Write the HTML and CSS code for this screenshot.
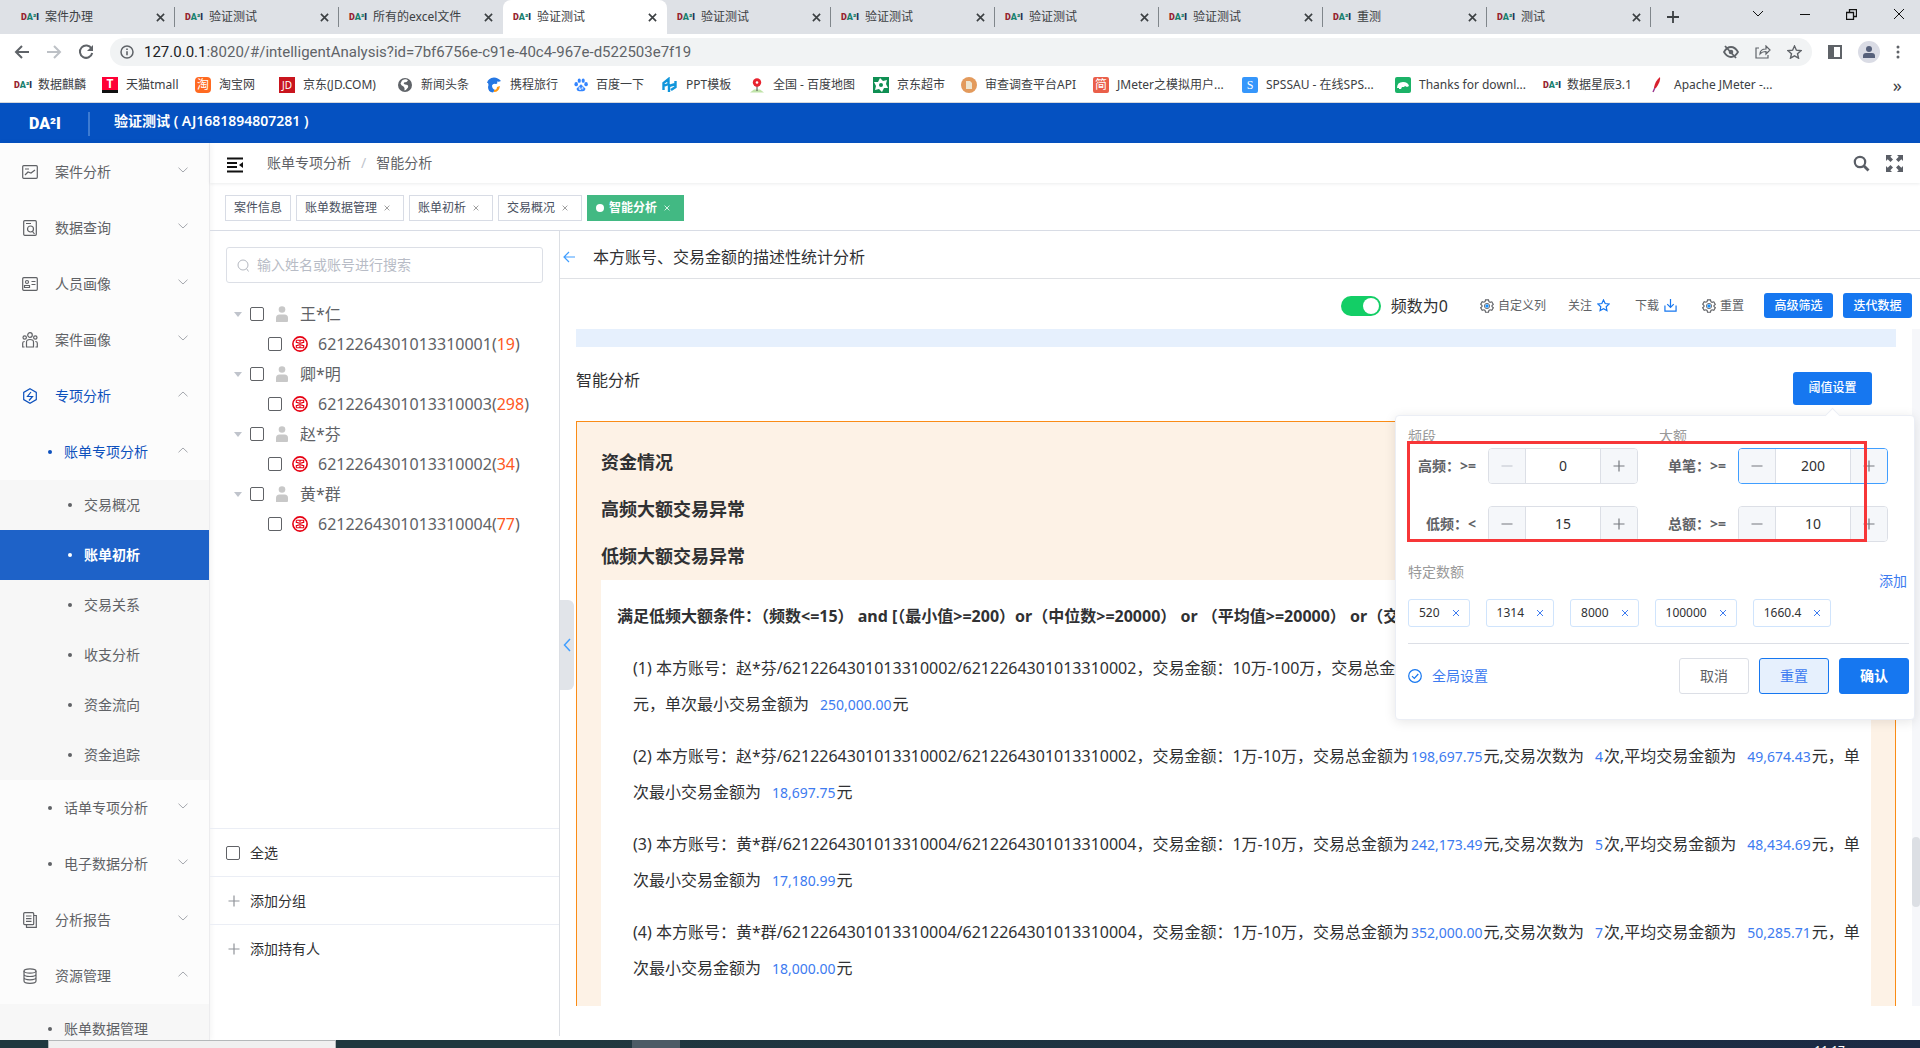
FILE: index.html
```html
<!DOCTYPE html>
<html lang="zh-CN">
<head>
<meta charset="utf-8">
<title>验证测试</title>
<link rel="stylesheet" href="styles.css">
</head>
<body>
<svg class="sprite" aria-hidden="true">
  <symbol id="i-x" viewBox="0 0 10 10"><path d="M1 1l8 8M9 1l-8 8" fill="none" stroke="currentColor" stroke-width="1.8"/></symbol>
  <symbol id="i-thinx" viewBox="0 0 10 10"><path d="M2 2l6 6M8 2l-6 6" fill="none" stroke="currentColor" stroke-width="1"/></symbol>
  <symbol id="i-down" viewBox="0 0 10 6"><path d="M.5 .7l4.500 4.300 4.500-4.300" fill="none" stroke="currentColor"/></symbol>
  <symbol id="i-up" viewBox="0 0 10 6"><path d="M.5 5.300l4.500-4.300 4.500 4.300" fill="none" stroke="currentColor"/></symbol>
  <symbol id="i-person" viewBox="0 0 12 16"><circle cx="6" cy="3.500" r="3.300" fill="#c8c8c8"/><path d="M0 16v-4q0-3.500 3.500-3.500h5q3.500 0 3.500 3.500v3q0 1-1 1z" fill="#c8c8c8"/></symbol>
  <symbol id="i-bank" viewBox="0 0 16 16"><circle cx="8" cy="8" r="7.100" fill="none" stroke="#e60012" stroke-width="1.600"/><path d="M4.300 4.300h7.400v2.200h-2.400M4.300 4.300v2.200h2.400M4.300 11.700h7.400V9.500h-2.400M4.300 11.700V9.500h2.400M8 4.300v7.400M5.500 8h5" fill="none" stroke="#e60012" stroke-width="1.100"/></symbol>
  <symbol id="i-gear" viewBox="0 0 16 16"><path d="M6.300 1h3.400l.5 2 1.300.8 2-.6 1.700 2.900-1.500 1.300v1.300l1.500 1.300-1.700 2.900-2-.6-1.300.8-.5 2H6.300l-.5-2-1.300-.8-2 .6L.8 10l1.500-1.300V7.400L.8 6l1.700-2.900 2 .6L5.800 3z" fill="none" stroke="#606266" stroke-width="1.300"/><circle cx="8" cy="8" r="3" fill="none" stroke="#606266"/><circle cx="8" cy="8" r="2" fill="#1890ff"/></symbol>
  <symbol id="i-plus" viewBox="0 0 12 12"><path d="M6 .5v11M.5 6h11" fill="none" stroke="currentColor" stroke-width="1.200"/></symbol>
  <symbol id="i-minus" viewBox="0 0 12 12"><path d="M.5 6h11" fill="none" stroke="currentColor" stroke-width="1.200"/></symbol>
</svg>
<div class="window">
  <nav class="tabstrip" aria-label="浏览器标签">
    <div class="btab"><span class="dai"><i>D</i><b>A²</b><u>I</u></span><span class="bt">案件办理</span><svg class="x"><use href="#i-x"/></svg></div>
    <div class="btab"><span class="dai"><i>D</i><b>A²</b><u>I</u></span><span class="bt">验证测试</span><svg class="x"><use href="#i-x"/></svg></div>
    <div class="btab nosep"><span class="dai"><i>D</i><b>A²</b><u>I</u></span><span class="bt">所有的excel文件</span><svg class="x"><use href="#i-x"/></svg></div>
    <div class="btab current"><span class="dai"><i>D</i><b>A²</b><u>I</u></span><span class="bt">验证测试</span><svg class="x"><use href="#i-x"/></svg></div>
    <div class="btab"><span class="dai"><i>D</i><b>A²</b><u>I</u></span><span class="bt">验证测试</span><svg class="x"><use href="#i-x"/></svg></div>
    <div class="btab"><span class="dai"><i>D</i><b>A²</b><u>I</u></span><span class="bt">验证测试</span><svg class="x"><use href="#i-x"/></svg></div>
    <div class="btab"><span class="dai"><i>D</i><b>A²</b><u>I</u></span><span class="bt">验证测试</span><svg class="x"><use href="#i-x"/></svg></div>
    <div class="btab"><span class="dai"><i>D</i><b>A²</b><u>I</u></span><span class="bt">验证测试</span><svg class="x"><use href="#i-x"/></svg></div>
    <div class="btab"><span class="dai"><i>D</i><b>A²</b><u>I</u></span><span class="bt">重测</span><svg class="x"><use href="#i-x"/></svg></div>
    <div class="btab"><span class="dai"><i>D</i><b>A²</b><u>I</u></span><span class="bt">测试</span><svg class="x"><use href="#i-x"/></svg></div>
    <div class="winctl">
      <svg width="14" height="14" viewBox="0 0 14 14"><path d="M7 1v12M1 7h12" stroke="#3c4043" stroke-width="1.800"/></svg>
      <span class="grow"></span>
      <svg width="12" height="8" viewBox="0 0 12 8"><path d="M1 1l5 5 5-5" fill="none" stroke="#111"/></svg>
      <svg width="10" height="10" viewBox="0 0 10 10"><path d="M0 5.500h10" stroke="#111"/></svg>
      <svg width="11" height="11" viewBox="0 0 11 11"><path d="M.5 3.500h7v7h-7zM3.500 3.500v-3h7v7h-3" fill="none" stroke="#111" stroke-width="1.300"/></svg>
      <svg width="12" height="12" viewBox="0 0 12 12"><path d="M1 1l10 10M11 1L1 11" stroke="#111"/></svg>
    </div>
  </nav>

  <div class="urlbar">
    <svg width="16" height="16" viewBox="0 0 16 16"><path d="M15 8H2M8 2L2 8l6 6" fill="none" stroke="#5f6368" stroke-width="2"/></svg>
    <svg width="16" height="16" viewBox="0 0 16 16"><path d="M1 8h13M8 2l6 6-6 6" fill="none" stroke="#bdc1c6" stroke-width="2"/></svg>
    <svg width="16" height="16" viewBox="0 0 16 16"><path d="M13.500 4.500A6.200 6.200 0 1 0 14.200 9" fill="none" stroke="#5f6368" stroke-width="2"/><path d="M15 1v6H9z" fill="#5f6368"/></svg>
    <div class="address">
      <svg width="14" height="14" viewBox="0 0 14 14"><circle cx="7" cy="7" r="6" fill="none" stroke="#5f6368" stroke-width="1.500"/><path d="M7 6.200v4M7 3.500v1.600" stroke="#5f6368" stroke-width="1.600"/></svg>
      <span class="url"><em>127.0.0.1</em>:8020/#/intelligentAnalysis?id=7bf6756e-c91e-40c4-967e-d522503e7f19</span>
      <svg width="16" height="14" viewBox="0 0 16 14"><path d="M1 7q3-5 7-5t7 5q-3 5-7 5T1 7z" fill="none" stroke="#5f6368" stroke-width="1.800"/><circle cx="8" cy="7" r="2.300" fill="#5f6368"/><path d="M2 1l11 12" stroke="#5f6368" stroke-width="1.800"/></svg>
      <svg width="16" height="14" viewBox="0 0 16 14"><path d="M4 3H1v10h12v-3M5 9q0-5 6-5V1l4 4-4 4V6.500Q7 6.500 5 9z" fill="none" stroke="#5f6368" stroke-width="1.200"/></svg>
      <svg width="15" height="14" viewBox="0 0 15 14"><path d="M7.500 1l1.900 4.200 4.600.5-3.500 3 1 4.400-4-2.300-4 2.300 1-4.400-3.500-3 4.600-.5z" fill="none" stroke="#5f6368" stroke-width="1.400"/></svg>
    </div>
    <svg width="14" height="14" viewBox="0 0 14 14"><path d="M0 0h14v14H0zM6 2v10h6V2z" fill="#5f6368" fill-rule="evenodd"/></svg>
    <svg width="22" height="22" viewBox="0 0 22 22"><circle cx="11" cy="11" r="11" fill="#dadce5"/><circle cx="11" cy="8" r="3" fill="#56607a"/><path d="M5 17v-2q0-3 3-3h6q3 0 3 3v2z" fill="#56607a"/></svg>
    <svg width="4" height="14" viewBox="0 0 4 14"><g fill="#5f6368"><circle cx="2" cy="2" r="1.500"/><circle cx="2" cy="7" r="1.500"/><circle cx="2" cy="12" r="1.500"/></g></svg>
  </div>

  <nav class="bookmarks" aria-label="书签">
    <a href="#"><span class="dai"><i>D</i><b>A²</b><u>I</u></span>数据麒麟</a>
    <a href="#"><span class="fav tmall">T</span>天猫tmall</a>
    <a href="#"><span class="fav taobao">淘</span>淘宝网</a>
    <a href="#"><span class="fav jd">JD</span>京东(JD.COM)</a>
    <a href="#"><svg width="16" height="16" viewBox="0 0 16 16"><circle cx="8" cy="8" r="7" fill="#5f6368"/><path d="M5 3.500q4-2.500 6 0-1 2-4 2-1 1.500 1 2 4 0 3 3-2 3-3.500 3 .5-3-1-4-2.500-1-3-3z" fill="#fff"/></svg>新闻头条</a>
    <a href="#"><svg width="16" height="16" viewBox="0 0 16 16"><path d="M1 6q1-5 7-5.500 4 0 7 3.500-2 1-4 .5 1 2-1 2.500-3-1-4 1.500 0 3 3 4.500l-2 2.500Q2 15 2 10q1-2 0-4z" fill="#2577e3"/><path d="M8 15q5 0 6-6l-3 1q0 3-3 3z" fill="#ff9913"/></svg>携程旅行</a>
    <a href="#"><svg width="14" height="16" viewBox="0 0 16 16"><g fill="#3385ff"><ellipse cx="2.500" cy="7" rx="2" ry="2.500"/><ellipse cx="6" cy="3" rx="1.800" ry="2.500"/><ellipse cx="10.500" cy="3" rx="1.800" ry="2.500"/><ellipse cx="13.800" cy="7" rx="2" ry="2.500"/><path d="M8 7l5 5q0 4-5 3-5 1-5-3z"/></g><path d="M6 10v3h2v-2M10 10v3" fill="none" stroke="#fff"/></svg>百度一下</a>
    <a href="#"><svg width="16" height="16" viewBox="0 0 16 16"><path d="M1.500 13V6l5-4v5l-5 2M7 15V9l6.500-2V4M13.500 6v4L9 13" fill="none" stroke="#1196db" stroke-width="2.400"/></svg>PPT模板</a>
    <a href="#"><svg width="16" height="16" viewBox="0 0 16 16"><path d="M1 15.500l4-3h6l4 3z" fill="#bfe3a8"/><path d="M8 14V9" stroke="#444"/><circle cx="8" cy="5.500" r="4.200" fill="#e8232f"/><circle cx="8" cy="5.500" r="1.300" fill="#fff"/></svg>全国 - 百度地图</a>
    <a href="#"><svg width="16" height="16" viewBox="0 0 16 16"><path d="M0 0h16v16H0z" fill="#0f8f53"/><path d="M7 1l3 3 4-1-1 4 2 4-4 0-2 4-3-3-4 1 1-4-2-4 4 0z" fill="#fff"/><circle cx="8" cy="8" r="2" fill="#0f8f53"/></svg>京东超市</a>
    <a href="#"><svg width="16" height="16" viewBox="0 0 16 16"><circle cx="8" cy="8" r="8" fill="#e39a5c"/><path d="M5 4h4l2 2v6H5z" fill="#eee5d0"/></svg>审查调查平台API</a>
    <a href="#"><span class="fav jian">简</span>JMeter之模拟用户...</a>
    <a href="#"><span class="fav spss">S</span>SPSSAU - 在线SPS...</a>
    <a href="#"><svg width="16" height="16" viewBox="0 0 16 16"><rect width="16" height="16" rx="2" fill="#1bb267"/><path d="M2 11q0-6 6-6 5 0 6 4l-2 1-2-1-1 1H7l-1 2H4v-1z" fill="#fff"/></svg>Thanks for downl...</a>
    <a href="#"><span class="dai"><i>D</i><b>A²</b><u>I</u></span>数据星辰3.1</a>
    <a href="#"><svg width="16" height="16" viewBox="0 0 16 16"><path d="M3 15L8 4" stroke="#9b3b90" stroke-width="1.500"/><path d="M4 11Q5 4 10 0q1 4-4 11z" fill="#d8202e"/></svg>Apache JMeter -...</a>
    <span class="more">»</span>
  </nav>

  <header class="apphead"><span class="logo">DA²I</span><strong>验证测试 ( AJ1681894807281 )</strong></header>

  <div class="app">
    <aside class="side">
      <a class="m" href="#"><svg class="ic" viewBox="0 0 16 16"><rect x=".7" y="1.700" width="14.600" height="12.600" rx="1"/><path d="M3 5h4M3 11l3-3 3 1 4-3"/></svg><span>案件分析</span><svg class="ch"><use href="#i-down"/></svg></a>
      <a class="m" href="#"><svg class="ic" viewBox="0 0 16 16"><rect x="1.700" y=".7" width="12.600" height="14.600" rx="1"/><path d="M4 3.500h5M10.500 11.500l2 2.500"/><circle cx="8.500" cy="9" r="3"/></svg><span>数据查询</span><svg class="ch"><use href="#i-down"/></svg></a>
      <a class="m" href="#"><svg class="ic" viewBox="0 0 16 16"><rect x=".7" y="1.700" width="14.600" height="12.600" rx="1"/><circle cx="5" cy="6" r="1.500"/><path d="M2.500 11.500v-2h5v2zM9.500 5.500h4M9.500 8.500h4"/></svg><span>人员画像</span><svg class="ch"><use href="#i-down"/></svg></a>
      <a class="m" href="#"><svg class="ic" viewBox="0 0 16 16"><circle cx="8" cy="3" r="2.300"/><circle cx="2.700" cy="5.500" r="1.700"/><circle cx="13.300" cy="5.500" r="1.700"/><path d="M4.500 15V10q0-2.500 3.500-2.500t3.500 2.500v5zM2.500 15H.7v-4q0-1.500 2-1.500M13.500 15h1.800v-4q0-1.500-2-1.500"/></svg><span>案件画像</span><svg class="ch"><use href="#i-down"/></svg></a>
      <a class="m on" href="#"><svg class="ic" viewBox="0 0 16 16"><path d="M8 .8l6.300 3.600v7.200L8 15.200l-6.300-3.600V4.400zM9 4L5.500 8.500h5L7 12.500"/></svg><span>专项分析</span><svg class="ch"><use href="#i-up"/></svg></a>
      <a class="m sub on" href="#"><span>账单专项分析</span><svg class="ch"><use href="#i-up"/></svg></a>
      <a class="m leaf" href="#"><span>交易概况</span></a>
      <a class="m leaf picked" href="#"><span>账单初析</span></a>
      <a class="m leaf" href="#"><span>交易关系</span></a>
      <a class="m leaf" href="#"><span>收支分析</span></a>
      <a class="m leaf" href="#"><span>资金流向</span></a>
      <a class="m leaf" href="#"><span>资金追踪</span></a>
      <a class="m sub" href="#"><span>话单专项分析</span><svg class="ch"><use href="#i-down"/></svg></a>
      <a class="m sub" href="#"><span>电子数据分析</span><svg class="ch"><use href="#i-down"/></svg></a>
      <a class="m" href="#"><svg class="ic" viewBox="0 0 16 16"><rect x="1.700" y=".7" width="10" height="12" rx="1"/><path d="M4 4h5.500M4 6.700h5.500M4 9.300h5.500M4.500 13v2.300h9.800V3.500H12"/></svg><span>分析报告</span><svg class="ch"><use href="#i-down"/></svg></a>
      <a class="m" href="#"><svg class="ic" viewBox="0 0 16 16"><ellipse cx="8" cy="3" rx="6" ry="2.200"/><path d="M2 3v10q0 2.300 6 2.300t6-2.300V3M2 6.300q0 2.200 6 2.200t6-2.200M2 9.600q0 2.200 6 2.200t6-2.200"/></svg><span>资源管理</span><svg class="ch"><use href="#i-up"/></svg></a>
      <a class="m leaf second" href="#"><span>账单数据管理</span></a>
    </aside>

    <main class="main">
      <div class="crumbs">
        <svg width="16" height="16" viewBox="0 0 16 16"><path d="M0 1.500h16M0 6h10M0 10h10M0 14.500h16" stroke="#111" stroke-width="1.800"/><path d="M16 5v6l-4-3z" fill="#111"/></svg>
        <span>账单专项分析</span><i>/</i><span>智能分析</span>
        <span class="grow"></span>
        <svg width="17" height="17" viewBox="0 0 17 17"><circle cx="7" cy="7" r="5.200" fill="none" stroke="#5a5e66" stroke-width="2.200"/><path d="M10.500 10.500l5 5" stroke="#5a5e66" stroke-width="2.800"/></svg>
        <svg width="17" height="17" viewBox="0 0 17 17"><path d="M0 0h6L4.300 1.700 7 4.500 4.500 7 1.700 4.300 0 6zM17 0v6l-1.700-1.700L12.500 7 10 4.500l2.700-2.800L11 0zM0 17v-6l1.700 1.700L4.500 10 7 12.500l-2.700 2.800L6 17zM17 17h-6l1.700-1.700-2.700-2.800L12.500 10l2.800 2.700L17 11z" fill="#5a5e66"/></svg>
      </div>
      <div class="tags">
        <a href="#">案件信息</a>
        <a href="#">账单数据管理<svg><use href="#i-thinx"/></svg></a>
        <a href="#">账单初析<svg><use href="#i-thinx"/></svg></a>
        <a href="#">交易概况<svg><use href="#i-thinx"/></svg></a>
        <a href="#" class="live">智能分析<svg><use href="#i-thinx"/></svg></a>
      </div>

      <div class="split">
        <section class="tree">
          <label class="search"><svg width="13" height="13" viewBox="0 0 13 13"><circle cx="6" cy="6" r="5" fill="none" stroke="#b4b8c0"/><path d="M9.500 9.500l2 3" stroke="#b4b8c0"/></svg><input type="text" placeholder="输入姓名或账号进行搜索" aria-label="搜索"></label>
          <div class="nodes">
            <label class="who"><input type="checkbox"><svg><use href="#i-person"/></svg>王*仁</label>
            <label class="acct"><input type="checkbox"><svg><use href="#i-bank"/></svg><span>6212264301013310001(<em>19</em>)</span></label>
            <label class="who"><input type="checkbox"><svg><use href="#i-person"/></svg>卿*明</label>
            <label class="acct"><input type="checkbox"><svg><use href="#i-bank"/></svg><span>6212264301013310003(<em>298</em>)</span></label>
            <label class="who"><input type="checkbox"><svg><use href="#i-person"/></svg>赵*芬</label>
            <label class="acct"><input type="checkbox"><svg><use href="#i-bank"/></svg><span>6212264301013310002(<em>34</em>)</span></label>
            <label class="who"><input type="checkbox"><svg><use href="#i-person"/></svg>黄*群</label>
            <label class="acct"><input type="checkbox"><svg><use href="#i-bank"/></svg><span>6212264301013310004(<em>77</em>)</span></label>
          </div>
          <div class="foot">
            <label><input type="checkbox">全选</label>
            <button type="button"><svg><use href="#i-plus"/></svg>添加分组</button>
            <button type="button"><svg><use href="#i-plus"/></svg>添加持有人</button>
          </div>
        </section>

        <section class="detail">
          <button type="button" class="handle" aria-label="收起"><svg width="8" height="14" viewBox="0 0 8 14"><path d="M7 1L1.500 7 7 13" fill="none" stroke="#409eff" stroke-width="1.500"/></svg></button>
          <h1><svg width="12" height="12" viewBox="0 0 12 12"><path d="M12 6H1M6 1L1 6l5 5" fill="none" stroke="#409eff" stroke-width="1.200"/></svg>本方账号、交易金额的描述性统计分析</h1>
          <div class="tools">
            <label class="sw"><input type="checkbox" checked>频数为0</label>
            <a class="t1" href="#"><svg width="14" height="14"><use href="#i-gear"/></svg>自定义列</a>
            <a class="t2" href="#">关注<svg width="13" height="13" viewBox="0 0 14 14"><path d="M7 1l1.800 3.900 4.200.5-3.100 2.900.8 4.200L7 10.400l-3.700 2.100.8-4.200L1 5.400l4.200-.5z" fill="none" stroke="#1677f0" stroke-width="1.300"/></svg></a>
            <a class="t2" href="#">下载<svg width="13" height="13" viewBox="0 0 14 14"><path d="M7 0v8.500M3.500 5.500L7 9l3.500-3.500M1 7v6h12V7" fill="none" stroke="#1677f0" stroke-width="1.300"/></svg></a>
            <a class="t3" href="#"><svg width="14" height="14"><use href="#i-gear"/></svg>重置</a>
            <button type="button" class="blue">高级筛选</button>
            <button type="button" class="blue">迭代数据</button>
          </div>
          <div class="scroll">
            <div class="strip"></div>
            <div class="sect"><h2>智能分析</h2>
              <div class="anchor">
                <button type="button" class="blue big">阈值设置</button>
                <form class="pop" onsubmit="return false">
                  <div class="heads"><span>频段</span><span>大额</span></div>
                  <div class="grid">
                    <label for="n1">高频：&gt;=</label><div class="step"><button type="button" disabled aria-label="减"><svg><use href="#i-minus"/></svg></button><input id="n1" value="0"><button type="button" aria-label="加"><svg><use href="#i-plus"/></svg></button></div>
                    <label for="n2">单笔：&gt;=</label><div class="step hot"><button type="button" aria-label="减"><svg><use href="#i-minus"/></svg></button><input id="n2" value="200"><button type="button" aria-label="加"><svg><use href="#i-plus"/></svg></button></div>
                    <label for="n3">低频：&lt;</label><div class="step"><button type="button" aria-label="减"><svg><use href="#i-minus"/></svg></button><input id="n3" value="15"><button type="button" aria-label="加"><svg><use href="#i-plus"/></svg></button></div>
                    <label for="n4">总额：&gt;=</label><div class="step"><button type="button" aria-label="减"><svg><use href="#i-minus"/></svg></button><input id="n4" value="10"><button type="button" aria-label="加"><svg><use href="#i-plus"/></svg></button></div>
                  </div>
                  <div class="mark"></div>
                  <div class="spec"><span>特定数额</span><a href="#">添加</a></div>
                  <div class="chips">
                    <span>520<svg><use href="#i-thinx"/></svg></span><span>1314<svg><use href="#i-thinx"/></svg></span><span>8000<svg><use href="#i-thinx"/></svg></span><span>100000<svg><use href="#i-thinx"/></svg></span><span>1660.4<svg><use href="#i-thinx"/></svg></span>
                  </div>
                  <div class="acts">
                    <a href="#"><svg width="14" height="14" viewBox="0 0 14 14"><circle cx="7" cy="7" r="6.300" fill="none" stroke="#1677f0" stroke-width="1.200"/><path d="M4 7.200l2.300 2.300 4-4.500" fill="none" stroke="#1677f0" stroke-width="1.200"/></svg>全局设置</a>
                    <button type="button">取消</button><button type="button" class="soft">重置</button><button type="button" class="solid">确认</button>
                  </div>
                </form>
              </div>
            </div>
            <article class="report">
              <h3>资金情况</h3><h3>高频大额交易异常</h3><h3>低频大额交易异常</h3>
              <div class="paper">
                <p class="cond">满足低频大额条件：（频数&lt;=15） and [（最小值&gt;=200）or（中位数&gt;=20000） or （平均值&gt;=20000） or（交易总额&gt;=10）]</p>
                <p>(1) 本方账号：赵*芬/6212264301013310002/6212264301013310002，交易金额：10万-100万，交易总金额为<b>250,000.00</b>元,交易次数为 <b class="g">1</b>次,平均交易金额为<b class="g">250,000.00</b><br>元，单次最小交易金额为<b class="g">250,000.00</b>元</p>
                <p>(2) 本方账号：赵*芬/6212264301013310002/6212264301013310002，交易金额：1万-10万，交易总金额为<b>198,697.75</b>元,交易次数为<b class="g">4</b>次,平均交易金额为<b class="g">49,674.43</b>元，单<br>次最小交易金额为<b class="g">18,697.75</b>元</p>
                <p>(3) 本方账号：黄*群/6212264301013310004/6212264301013310004，交易金额：1万-10万，交易总金额为<b>242,173.49</b>元,交易次数为<b class="g">5</b>次,平均交易金额为<b class="g">48,434.69</b>元，单<br>次最小交易金额为<b class="g">17,180.99</b>元</p>
                <p>(4) 本方账号：黄*群/6212264301013310004/6212264301013310004，交易金额：1万-10万，交易总金额为<b>352,000.00</b>元,交易次数为<b class="g">7</b>次,平均交易金额为<b class="g">50,285.71</b>元，单<br>次最小交易金额为<b class="g">18,000.00</b>元</p>
              </div>
            </article>
            <div class="bar"><span></span></div>
          </div>
        </section>
      </div>
    </main>
  </div>

  <footer class="taskbar"><span class="field"></span><span class="win"></span><time>11:17</time></footer>
</div>
</body>
</html>
```
FILE: styles.css
```css
* { box-sizing: border-box; }
body, h1, h2, h3, p { margin: 0; }
body { font: 14px/20px "Noto Sans", "Noto Sans CJK SC", sans-serif; color: #303133; background: #fff; }
a { color: inherit; text-decoration: none; }
button, input { font: inherit; color: inherit; margin: 0; padding: 0; border: 0; background: none; }
svg { flex: none; display: block; }
i, em { font-style: normal; }
.sprite { position: absolute; width: 0; height: 0; }
.grow { flex: 1; }
.window { height: 100vh; min-height: 640px; display: flex; flex-direction: column; overflow: hidden; }

/* browser frame */
.tabstrip { display: flex; flex: none; height: 34px; background: #dee1e6; padding-left: 11px; font-size: 12px; }
.btab { flex: none; width: 164px; display: flex; align-items: center; padding: 0 10px; color: #3c4043; position: relative; }
.btab::after { content: ""; position: absolute; right: 0; top: 7px; width: 1px; height: 20px; background: #80868b; }
.btab.nosep::after, .btab.current::after { display: none; }
.btab.current { background: #fff; border-radius: 8px 8px 0 0; }
.bt { flex: 1; white-space: nowrap; overflow: hidden; }
.btab .x { width: 9px; height: 9px; }
.dai { display: flex; width: 24px; flex: none; font: 900 9px/12px Roboto, sans-serif; }
.dai i { color: #96222f; }
.dai b { color: #17806e; font-weight: 900; }
.dai u { color: #1d2c50; text-decoration: none; }
.winctl { flex: 1; display: flex; align-items: center; gap: 36px; padding: 0 17px 6px 15px; }
.winctl svg:first-child { margin-top: 6px; }
.urlbar { flex: none; height: 38px; display: flex; align-items: center; gap: 16px; padding: 4px 20px 6px 14px; }
.address { flex: 1; height: 28px; border-radius: 14px; background: #f1f3f4; display: flex; align-items: center; gap: 16px; padding: 0 10px; }
.url { flex: 1; font: 15px/20px Roboto, sans-serif; color: #5f6368; margin-left: -6px; }
.url em { color: #202124; }
.bookmarks { flex: none; height: 31px; border-bottom: 1px solid #d5d8dc; padding: 0 18px 4px 14px; display: grid; grid-template-columns: 88px 93px 84px 118px 89px 88px 88px 87px 124px 88px 132px 149px 153px 148px 107px 1fr auto; align-items: center; font-size: 12px; color: #3c4043; }
.bookmarks a { display: flex; align-items: center; gap: 8px; white-space: nowrap; }
.bookmarks .dai { width: 16px; }
.more { font-size: 18px; }
.fav { width: 16px; height: 16px; color: #fff; text-align: center; font-size: 12px; line-height: 16px; }
.tmall { background: #ff0036; border-bottom: 3px solid #111; font-weight: 700; line-height: 14px; }
.taobao { background: #ff6a21; border-radius: 4px; }
.jd { background: #c9151e; font-size: 10px; }
.jian { background: #ea5f4a; border-radius: 2px; }
.spss { background: #3596fb; border-radius: 2px; font-family: "Liberation Serif", serif; }

/* application frame */
.apphead { flex: none; height: 40px; background: #0551c1; color: #fff; display: flex; align-items: center; font-size: 14px; padding: 0 0 4px 29px; }
.apphead strong { font-weight: 600; }
.logo { font: 900 16px/24px Roboto, sans-serif; width: 61px; margin: 5px 24px 0 0; border-right: 2px solid #3d7bd2; }
.app { flex: 1; min-height: 0; display: flex; }
.side { flex: none; width: 210px; overflow: hidden; background: #fcfcfc; border-right: 1px solid #ececee; box-shadow: 1px 0 6px #0000000d; padding-top: 1px; }
.m { display: flex; align-items: center; height: 56px; padding: 0 21px 0 22px; color: #606266; }
.m .ic { width: 16px; height: 16px; margin-right: 17px; fill: none; stroke: #606266; stroke-width: 1.200; }
.m span { flex: 1; }
.m .ch { width: 10px; height: 6px; color: #a5a8ae; margin-bottom: 4px; }
.m.on { color: #0d51bd; }
.m.on .ic { stroke: #0d51bd; }
.sub, .leaf { padding-left: 48px; }
.sub::before, .leaf::before { content: ""; width: 4px; height: 4px; border-radius: 50%; background: currentColor; margin-right: 12px; }
.leaf { height: 50px; background: #f7f7f7; padding-left: 68px; }
.leaf.second { padding-left: 48px; }
.leaf.picked { background: #1e62c8; color: #fff; font-weight: 700; }
.main { flex: 1; min-width: 0; display: flex; flex-direction: column; }
.crumbs { flex: none; height: 40px; display: flex; align-items: center; gap: 24px; padding: 0 17px; color: #606266; box-shadow: 0 1px 3px #00152914; }
.crumbs i { color: #c0c4cc; margin: 0 -14px; }
.crumbs svg:last-child { margin-left: -8px; }
.crumbs > svg:first-child { margin-top: 4px; }
.tags { flex: none; height: 48px; border-bottom: 1px solid #d8dce5; display: flex; gap: 5px; padding: 12px 15px; font-size: 12px; line-height: 24px; color: #495060; }
.tags a { height: 26px; border: 1px solid #d8dce5; padding: 0 8px; display: flex; align-items: center; }
.tags svg { width: 8px; height: 8px; margin: 0 4px 0 6px; color: #888; }
.tags .live { background: #42b983; border-color: #42b983; color: #fff; font-weight: 700; }
.tags .live svg { color: #fff; }
.tags .live::before { content: ""; width: 8px; height: 8px; border-radius: 50%; background: #fff; margin-right: 5px; }
.split { flex: 1; min-height: 0; display: flex; }

/* account tree */
.tree { flex: none; width: 350px; display: flex; flex-direction: column; border-right: 1px solid #dcdfe4; padding-top: 16px; margin-bottom: 4px; }
.search { flex: none; height: 36px; margin: 0 16px; border: 1px solid #dcdfe6; border-radius: 3px; display: flex; align-items: center; gap: 7px; padding: 0 10px; }
.search input { flex: 1; outline: 0; }
.search input::placeholder { color: #b8bcc6; opacity: 1; }
input[type="checkbox"] { appearance: none; flex: none; width: 14px; height: 14px; border: 1px solid #606266; border-radius: 2px; background: #fff; }
.nodes { flex: 1; padding: 16px 0 0 24px; font-size: 16px; color: #606266; }
.nodes label { height: 30px; display: flex; align-items: center; }
.who::before { content: ""; border: 4px solid transparent; border-top: 5px solid #c0c4cc; border-bottom: 0; margin-right: 8px; }
.who svg { width: 12px; height: 16px; margin: 0 12px; }
.acct { padding-left: 34px; }
.acct svg { width: 16px; height: 16px; margin: 0 10px; }
.nodes em { color: #ff5722; }
.foot { flex: none; padding-bottom: 64px; }
.foot > * { display: flex; align-items: center; width: 100%; height: 48px; border-top: 1px solid #ebeef5; padding-left: 16px; }
.foot input { margin-right: 10px; }
.foot svg { width: 12px; height: 12px; color: #909399; margin: 0 10px 0 2px; }

/* detail */
.detail { flex: 1; min-width: 0; position: relative; display: flex; flex-direction: column; }
h1 { flex: none; height: 48px; border-bottom: 1px solid #dfe1e5; display: flex; align-items: center; gap: 18px; padding: 4px 0 0 3px; font-size: 16px; font-weight: 400; }
.handle { position: absolute; left: 0; top: 369px; width: 14px; height: 90px; background: #e1e4e9; border-radius: 0 6px 6px 0; display: flex; align-items: center; justify-content: center; }
.tools { flex: none; height: 50px; display: flex; align-items: center; justify-content: flex-end; padding: 3px 8px 0 0; font-size: 12px; color: #606266; }
.tools a { display: flex; align-items: center; }
.sw { display: flex; align-items: center; gap: 10px; font-size: 16px; color: #303133; margin-right: 32px; }
.sw input[type="checkbox"] { width: 40px; height: 20px; border: 0; border-radius: 10px; background: #13ce66; display: flex; justify-content: flex-end; padding: 2px; }
.sw input::before { content: ""; width: 16px; height: 16px; border-radius: 50%; background: #fff; }
.t1, .t3 { gap: 4px; margin-right: 22px; }
.t3 { margin-right: 20px; }
.t2 { gap: 5px; margin-right: 25px; }
.blue { width: 69px; height: 25px; border-radius: 3px; background: #1677f0; color: #fff; font-size: 12px; font-weight: 500; }
.blue + .blue { margin-left: 10px; }
.blue.big { width: 79px; height: 33px; }
.scroll { flex: 1; min-height: 0; position: relative; display: flex; flex-direction: column; padding: 0 24px 0 16px; margin-bottom: 34px; }
.strip { flex: none; height: 18px; background: #e6f0fd; }
.sect { flex: none; height: 74px; display: flex; align-items: center; justify-content: space-between; padding: 8px 24px 0 0; }
h2 { font-size: 16px; font-weight: 400; margin-bottom: 16px; }
.bar { position: absolute; right: 0; top: 0; bottom: 0; width: 8px; background: #f6f7fa; }
.bar span { position: absolute; top: 75%; width: 8px; height: 70px; border-radius: 4px; background: #dcdfe4; }
.report { flex: 1; min-height: 0; overflow: hidden; border: 1px solid #fa8c16; border-bottom: 0; background: #fdf2e6; padding: 17px 24px 0; }
h3 { font-size: 18px; line-height: 47px; font-weight: 700; }
.paper { background: #fff; padding: 18px 0 60px 16px; font-size: 16px; line-height: 36px; white-space: nowrap; overflow: hidden; min-height: 500px; }
.paper p { margin: 0 0 16px 16px; }
.paper .cond { font-weight: 700; margin-left: 0; }
.paper p b { font-size: 14px; line-height: 20px; font-weight: 400; color: #3d7bf0; margin: 0 1px 0 2px; }
.paper p .g { margin-left: 11px; }

/* threshold popup */
.anchor { position: relative; z-index: 2; }
.pop { position: absolute; right: -43px; top: 43px; width: 520px; height: 305px; background: #fff; border: 1px solid #ebeef5; border-radius: 4px; box-shadow: 0 2px 12px #0000001a; padding: 10px 5px 0 12px; }
.pop::before { content: ""; position: absolute; right: 76px; top: -6px; width: 10px; height: 10px; background: #fff; border: 1px solid #ebeef5; border-width: 1px 0 0 1px; transform: rotate(45deg); }
.heads { display: grid; grid-template-columns: 251px 1fr; color: #999; height: 22px; }
.grid { display: grid; grid-template-columns: 68px 150px 76px 150px; column-gap: 12px; row-gap: 22px; }
.grid label { text-align: right; font-weight: 700; color: #606266; line-height: 36px; white-space: nowrap; }
.step { display: flex; height: 36px; border: 1px solid #dcdfe6; border-radius: 4px; overflow: hidden; }
.step button { width: 36px; background: #f5f7fa; display: flex; align-items: center; justify-content: center; color: #76797f; }
.step button:disabled { color: #c0c4cc; }
.step svg { width: 12px; height: 12px; }
.step input { flex: 1; min-width: 0; text-align: center; border: 1px solid #dcdfe6; border-width: 0 1px; }
.step.hot { border-color: #409eff; }
.mark { position: absolute; left: 11px; top: 25px; width: 460px; height: 101px; border: 3px solid #f73638; }
.spec { display: flex; justify-content: space-between; color: #999; padding: 20px 2px 0 0; height: 57px; }
.spec a { margin-top: 9px; color: #3d7bf0; }
.chips { display: flex; gap: 16px; height: 45px; border-bottom: 1px solid #dcdfe6; font-size: 12px; }
.chips span { height: 28px; border: 1px solid #d0e4fc; border-radius: 3px; padding: 0 8px 0 10px; display: flex; align-items: center; gap: 11px; }
.chips svg { width: 10px; height: 10px; color: #3d7bf0; }
.acts { display: flex; gap: 10px; padding-top: 14px; color: #606266; }
.acts a { flex: 1; display: flex; align-items: center; gap: 10px; color: #3d7bf0; }
.acts button { width: 70px; height: 36px; border: 1px solid #dcdfe6; border-radius: 3px; }
.acts .soft { border-color: #1677f0; background: #e6f0fd; color: #3d7bf0; }
.acts .solid { border-color: #1677f0; background: #1677f0; color: #fff; font-weight: 700; }

.taskbar { flex: none; height: 8px; overflow: hidden; background: linear-gradient(90deg, #20383f 0 30%, #1c2a44); display: flex; padding: 0 75px 0 48px; }
.field { width: 288px; background: #f0f0f0; border: 1px solid #b4b8ba; border-bottom: 0; }
.win { width: 48px; margin: 0 auto 0 296px; background: #4c5c66; }
.taskbar time { color: #fff; font-size: 12px; line-height: 22px; }
```
